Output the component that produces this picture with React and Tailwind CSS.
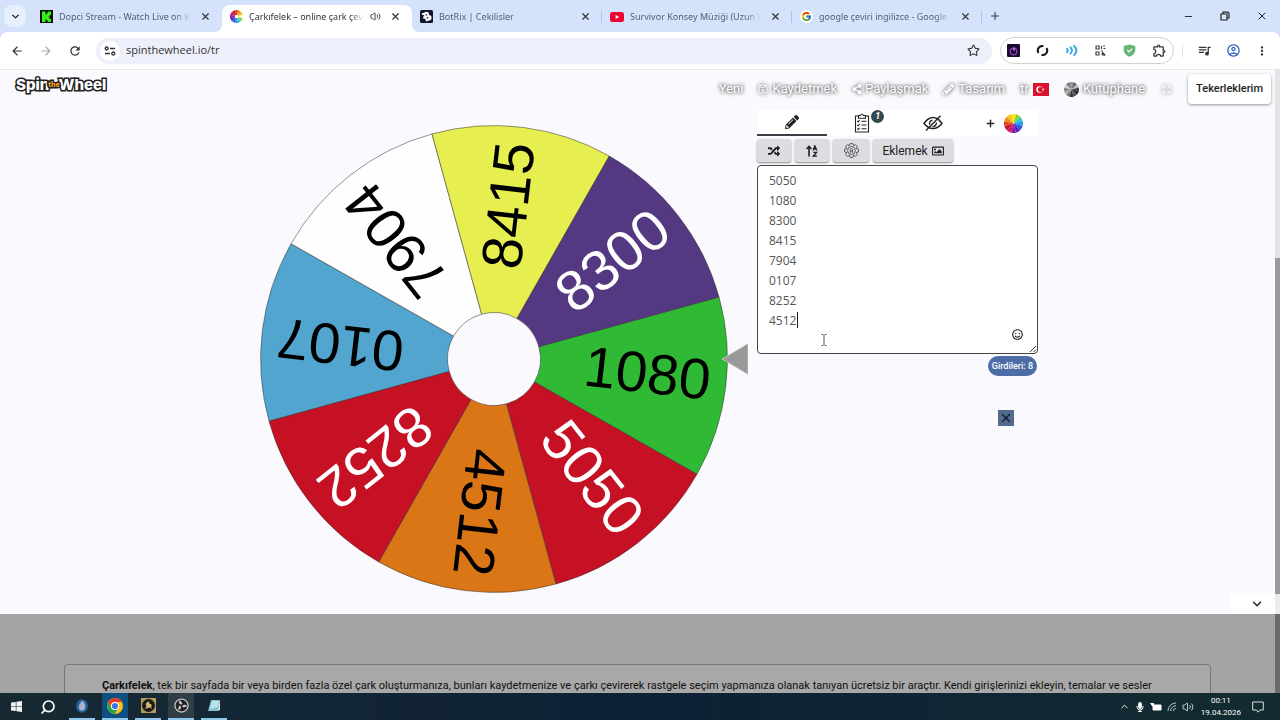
import { ChevronDown, ChevronUp, Minus, Plus, X, Star, Search, Volume2 } from 'lucide-react'
import { FaPencilAlt, FaRandom, FaRegImage, FaRegSave, FaShareAlt, FaRegSmile, FaMicrophone } from 'react-icons/fa'
import { FcGoogle } from 'react-icons/fc'
import {
  MdArrowBack,
  MdArrowForward,
  MdRefresh,
  MdFullscreen,
  MdMoreVert,
  MdOutlineAccountCircle,
  MdOutlineExtension,
  MdQueueMusic,
} from 'react-icons/md'

const SLICES = [
  { label: '1080', fill: '#30b934', text: '#000' },
  { label: '5050', fill: '#c61024', text: '#fff' },
  { label: '4512', fill: '#db7616', text: '#000' },
  { label: '8252', fill: '#c61024', text: '#fff' },
  { label: '0107', fill: '#52a5cf', text: '#000' },
  { label: '7904', fill: '#fefefe', text: '#000' },
  { label: '8415', fill: '#e7ee4f', text: '#000' },
  { label: '8300', fill: '#543881', text: '#fff' },
]

const ENTRIES = ['5050', '1080', '8300', '8415', '7904', '0107', '8252', '4512']

const RAINBOW = ['#f7ec1c', '#8fd32f', '#31c9c0', '#2a9df0', '#2a5be0', '#5a22b8', '#8e1aa0', '#d3156b', '#c4122d', '#e0461d', '#f08a1c', '#f9bf1b']
const GREYS = ['#999', '#666', '#bbb', '#444', '#222', '#555', '#333', '#777', '#aaa', '#888', '#ccc', '#777']

function point(radius, deg) {
  const rad = (deg * Math.PI) / 180
  return `${(radius * Math.cos(rad)).toFixed(2)} ${(radius * Math.sin(rad)).toFixed(2)}`
}

function slicePath(outer, inner, from, to) {
  return `M${point(inner, from)}L${point(outer, from)}A${outer} ${outer} 0 0 1 ${point(outer, to)}L${point(inner, to)}A${inner} ${inner} 0 0 0 ${point(inner, from)}Z`
}

function Wheel() {
  return (
    <svg viewBox="-234 -234 488 468" className="h-[468px] w-[488px] shrink-0" role="img" aria-label="Çarkıfelek">
      {SLICES.map((slice, i) => {
        const start = -15.4 + i * 45
        return (
          <g key={i}>
            <path d={slicePath(233.4, 46.5, start, start + 45)} fill={slice.fill} stroke="#333" strokeOpacity="0.75" strokeWidth="0.7" />
            <text
              x="154"
              y="16"
              transform={`rotate(${start + 22})`}
              textAnchor="middle"
              fontSize="57"
              fill={slice.text}
              fontFamily="'Liberation Sans', Arial, sans-serif"
            >
              {slice.label}
            </text>
          </g>
        )
      })}
      <path d="M228 0 254 -15.5V15.5Z" fill="#999" stroke="#ddd" strokeWidth="0.6" />
    </svg>
  )
}

function ColorWheel({ colors, className }) {
  const step = 360 / colors.length
  return (
    <svg viewBox="-10 -10 20 20" className={className} aria-hidden>
      {colors.map((color, i) => (
        <path key={i} d={slicePath(10, 0.1, -105 + i * step, -105 + (i + 1) * step)} fill={color} />
      ))}
    </svg>
  )
}

function RingIcon() {
  const step = 360 / RAINBOW.length
  return (
    <svg viewBox="-10 -10 20 20" className="size-[13px]" aria-hidden>
      {RAINBOW.map((color, i) => (
        <path key={i} d={slicePath(10, 2.5, -15 + i * step, -15 + (i + 1) * step)} fill={color} />
      ))}
      <circle r="2.5" fill="#fff" />
      <path d="M3 0 10-3.500v7z" fill="#fff" />
    </svg>
  )
}

function KickIcon() {
  return (
    <svg viewBox="0 0 13 13" className="size-[13px]" aria-hidden>
      <path d="M0 0h13v13H0z" fill="#0b120b" />
      <path d="M2 1.5h3.5v3h1V3.200h1.200V1.500H11v3.500H9.700v1.500h-1v1h1V9H11v3H7.700v-1.500H6.500V9.200h-1V12H2z" fill="#35f01b" />
    </svg>
  )
}

function BotrixIcon() {
  return (
    <svg viewBox="0 0 13 13" className="size-[13px]" aria-hidden>
      <rect width="13" height="13" rx="1.500" fill="#14142b" />
      <g transform="rotate(-20 6.500 6.500)">
        <path d="M3 2h4.500a2.300 2.300 0 0 1 1.700 3.900A2.600 2.600 0 0 1 7.500 11H4.500V8H3V5.500h1.500V4H3z" fill="#fff" />
        <path d="M6.200 4.300h1.300v1.200H6.200zM6.200 7.500h1.500v1.200H6.200z" fill="#14142b" />
      </g>
    </svg>
  )
}

function YoutubeIcon() {
  return (
    <svg viewBox="0 0 14 10" className="h-[10px] w-[14px]" aria-hidden>
      <rect width="14" height="10" rx="2.500" fill="#f00433" />
      <path d="M5.600 3 9.200 5 5.600 7z" fill="#fff" />
    </svg>
  )
}

const TABS = [
  { title: 'Dopci Stream - Watch Live on Kick', icon: <KickIcon /> },
  { title: 'Çarkıfelek – online çark çevirme', icon: <RingIcon />, active: true, audio: true },
  { title: 'BotRix | Cekilisler', icon: <BotrixIcon />, divider: true },
  { title: 'Survivor Konsey Müziği (Uzun Versiyon)', icon: <YoutubeIcon />, divider: true },
  {
    title: 'google çeviri ingilizce - Google Arama',
    icon: (
      <span className="rounded-full bg-white p-px">
        <FcGoogle size={11} />
      </span>
    ),
    divider: true,
  },
]

function BrowserTab({ tab }) {
  return (
    <div
      className={
        tab.active
          ? 'relative mt-[5px] flex h-[27px] w-[190px] min-w-0 items-center gap-[6px] rounded-t-lg bg-white px-2 pb-1 text-[#333] before:absolute before:bottom-0 before:-left-2 before:size-2 before:bg-[radial-gradient(circle_at_0_0,transparent_8px,#fff_8px)] after:absolute after:-right-2 after:bottom-0 after:size-2 after:bg-[radial-gradient(circle_at_100%_0,transparent_8px,#fff_8px)]'
          : 'relative mt-[5px] flex h-[27px] w-[190px] min-w-0 items-center gap-[6px] px-2 pb-1 text-[#51607a]'
      }
    >
      <span className="flex shrink-0 items-center">{tab.icon}</span>
      <span className="flex-1 overflow-hidden whitespace-nowrap text-[9px] leading-4 [mask-image:linear-gradient(to_right,#000_88%,transparent)]">
        {tab.title}
      </span>
      {tab.audio ? <Volume2 size={11} className="shrink-0" aria-hidden /> : null}
      <button type="button" aria-label="Sekmeyi kapat" className="flex shrink-0 items-center pr-[3px] pl-[3px] text-[#333]">
        <X size={11} strokeWidth={2.500} />
      </button>
      {tab.divider ? <span className="absolute top-[6px] right-0 h-3 w-px bg-[#a9c2ec]" /> : null}
    </div>
  )
}

function TabStrip() {
  return (
    <div className="flex h-8 items-start bg-[#d5e2fb]">
      <button type="button" aria-label="Sekmelerde ara" className="mt-[5px] mr-[6px] ml-1 flex size-[22px] shrink-0 items-center justify-center rounded-lg bg-[#e9f0fd] text-[#222]">
        <ChevronDown size={11} strokeWidth={3} />
      </button>
      <div className="flex min-w-0">
        {TABS.map((tab) => (
          <BrowserTab key={tab.title} tab={tab} />
        ))}
      </div>
      <button type="button" aria-label="Yeni sekme" className="ml-[7px] mt-[10px] text-[#333]">
        <Plus size={12} />
      </button>
      <div className="ml-auto mt-[10px] flex shrink-0 items-center gap-[26px] pr-3 text-[#222]">
        <button type="button" aria-label="Simge durumuna küçült">
          <Minus size={11} strokeWidth={2} />
        </button>
        <button type="button" aria-label="Önceki boyut">
          <svg viewBox="0 0 10 10" className="size-[10px]" fill="none" stroke="currentColor" strokeWidth="1.200" aria-hidden>
            <path d="M1 3h6v6H1zM3 3V1.200h4.500Q9 1.200 9 2.500V7H7" />
          </svg>
        </button>
        <button type="button" aria-label="Kapat">
          <X size={12} strokeWidth={2} />
        </button>
      </div>
    </div>
  )
}

function Toolbar() {
  return (
    <div className="flex h-[38px] shrink-0 items-center rounded-t-lg border-b border-[#e6e7ec] bg-white pr-[11px] pl-[10px] text-[#333]">
      <div className="flex items-center gap-[15px]">
        <button type="button" aria-label="Geri"><MdArrowBack size={14} /></button>
        <button type="button" aria-label="İleri" className="text-[#aaa]"><MdArrowForward size={14} /></button>
        <button type="button" aria-label="Yenile"><MdRefresh size={14} /></button>
      </div>
      <div className="ml-[14px] flex h-[26px] flex-1 items-center rounded-full bg-[#edf0fa] pr-3 pl-1">
        <span className="flex size-5 items-center justify-center rounded-full bg-white">
          <svg viewBox="0 0 12 12" className="size-3" fill="none" stroke="#333" strokeWidth="1.300" aria-hidden>
            <circle cx="2.700" cy="3.500" r="1.500" />
            <circle cx="9.300" cy="8.500" r="1.500" />
            <path d="M6 3.500h5M1 8.500h5" />
          </svg>
        </span>
        <input
          aria-label="Adres çubuğu"
          defaultValue="spinthewheel.io/tr"
          className="ml-[6px] min-w-0 flex-1 bg-transparent font-['Open_Sans',sans-serif] text-[11px] text-[#333] outline-none"
        />
        <button type="button" aria-label="Yer işareti ekle"><Star size={13} /></button>
      </div>
      <div className="ml-2 flex h-[27px] items-center gap-4 rounded-full border border-[#ccd3cc] px-[6px]">
        <svg viewBox="0 0 13 13" className="size-[13px]" aria-hidden>
          <rect width="13" height="13" rx="1" fill="#180b2e" />
          <circle cx="6.500" cy="7.500" r="3.300" fill="none" stroke="#8a3fc0" strokeWidth="1.300" />
          <path d="M6 3.500h2v3H6z" fill="#c05ad6" />
        </svg>
        <svg viewBox="0 0 13 13" className="size-[13px]" fill="none" stroke="#111" strokeWidth="2" aria-hidden>
          <path d="M7.500 2.100A4.500 4.500 0 0 0 2.600 9M5.500 10.900A4.500 4.500 0 0 0 10.400 4" />
        </svg>
        <svg viewBox="0 0 13 13" className="size-[13px]" fill="none" stroke="#2ba4ea" strokeWidth="1.800" strokeLinecap="round" aria-hidden>
          <path d="M2 5q1.500 1.500 0 3M5.500 3.500q3 3 0 6M9.200 2q4.500 4.500 0 9" />
        </svg>
        <svg viewBox="0 0 13 13" className="size-[13px]" fill="none" stroke="#444" strokeWidth="1.200" aria-hidden>
          <path d="M2 2h3v3H2zM2 8h3v3H2zM7.500 2v3M9 2h2M9.500 4.500h2M7 7h2" />
          <path d="M8 8.500 11 11.500M8 11l2-2" strokeWidth="2" />
        </svg>
        <svg viewBox="0 0 13 13" className="size-[13px]" aria-hidden>
          <path d="M6.500.500 12.300 2v4c0 3.500-3 5.600-5.800 6.800C3.700 11.600.700 9.500.700 6V2z" fill="#66b574" />
          <path d="m4.200 6 1.900 1.800 3-3.200" fill="none" stroke="#fff" strokeWidth="1.200" />
        </svg>
        <MdOutlineExtension size={15} aria-hidden />
      </div>
      <div className="ml-2 flex items-center gap-[14px]">
        <span className="h-3 w-px bg-[#dadde3]" />
        <MdQueueMusic size={15} aria-hidden />
        <MdOutlineAccountCircle size={15} className="text-[#2b5fc4]" aria-hidden />
        <button type="button" aria-label="Menü"><MdMoreVert size={14} /></button>
      </div>
    </div>
  )
}

function Flag() {
  return (
    <svg viewBox="0 0 16 13" className="h-[13px] w-4" aria-hidden>
      <path d="M0 0h16v13H0z" fill="#d8142c" />
      <circle cx="6.500" cy="6.500" r="3.200" fill="#fff" />
      <circle cx="7.400" cy="6.500" r="2.500" fill="#d8142c" />
      <path d="m11.700 6.500-2.600.9 1.600-2.300v2.800L9.100 5.600z" fill="#fff" />
    </svg>
  )
}

function SiteHeader() {
  return (
    <header className="flex h-10 items-start justify-between pr-1 pl-4">
      <a href="#" className="mt-[5px] flex items-center font-['Inter',sans-serif] text-[15px] leading-5 font-extrabold text-white [paint-order:stroke_fill] [-webkit-text-stroke:3px_#222]">
        Spin
        <span className="relative z-10 -mx-px text-[7px] text-[#f6a21c]">the</span>
        Wheel
      </a>
      <nav className="mt-1 flex items-center gap-[15px] text-[13px] leading-4 text-white [text-shadow:0_0_4px_#555,0_0_3px_#777]">
        <a href="#">Yeni</a>
        <a href="#" className="flex items-center gap-1">
          <FaRegSave size={10} className="drop-shadow-[0_0_2px_#333]" />
          Kaydetmek
        </a>
        <a href="#" className="flex items-center gap-[3px]">
          <FaShareAlt size={10} className="drop-shadow-[0_0_2px_#333]" />
          Paylaşmak
        </a>
        <a href="#" className="flex items-center gap-1">
          <FaPencilAlt size={11} className="drop-shadow-[0_0_2px_#333]" />
          Tasarım
        </a>
        <a href="#" className="flex items-center gap-1">
          tr
          <Flag />
        </a>
        <a href="#" className="flex items-center gap-1">
          <ColorWheel colors={GREYS} className="size-[15px]" />
          Kütüphane
        </a>
        <button type="button" aria-label="Tam ekran">
          <MdFullscreen size={13} className="drop-shadow-[0_0_2px_#333]" />
        </button>
        <button type="button" className="h-[30px] rounded bg-white px-2 text-[11px] font-medium text-[#222] shadow-[0_1px_3px_rgba(0,0,0,0.4)] [text-shadow:none]">
          Tekerleklerim
        </button>
      </nav>
    </header>
  )
}

function ClipboardIcon() {
  return (
    <svg viewBox="0 0 16 20" className="h-5 w-4" fill="none" stroke="#222" strokeWidth="1.100" aria-hidden>
      <path d="M4.500 3H1.500v16h13V3h-3M4.500 2.500h2Q8-.500 9.500 2.500h2v2.800h-7z" />
      <path d="m3.300 8 .9.900 1.500-1.700M3.300 11.800l.9.900 1.500-1.700M3.300 15.600l.9.900 1.500-1.700M7.500 8.300h5M7.500 12h5M7.500 15.800h5" />
    </svg>
  )
}

function EyeSlashIcon() {
  return (
    <svg viewBox="0 0 20 16" className="h-4 w-5" fill="none" stroke="#222" strokeWidth="1.400" aria-hidden>
      <path d="M1 8.500Q5 2.500 10 2.500T19 8.500Q15 13.500 10 13.500T1 8.500Z" />
      <path d="M9.500 5.200A3.200 3.200 0 0 0 6.800 9.800M13.200 7.500A3.200 3.200 0 0 1 9.500 11.400" />
      <path d="M3 15.500 17.500.800" />
    </svg>
  )
}

function SortIcon() {
  return (
    <svg viewBox="0 0 12 12" className="size-3" fill="none" stroke="#222" strokeWidth="1.600" aria-hidden>
      <path d="M3 11.500V1.500M.600 4 3 1.500 5.400 4" />
      <path d="M7 5.400 8.900.800 10.800 5.400M7.800 4h2.200M7.300 7.400h3.200L7.300 11h3.500" strokeWidth="1.300" />
    </svg>
  )
}

function GearIcon() {
  return (
    <svg viewBox="-8 -8 16 16" className="size-[15px]" fill="none" stroke="#444" strokeWidth="0.900" aria-hidden>
      {[0, 45, 90, 135, 180, 225, 270, 315].map((deg) => (
        <path key={deg} d="M-2.200-5-1.400-7.400h2.800L2.200-5" transform={`rotate(${deg})`} />
      ))}
      <circle r="4.200" />
      <path d="M-1.200 2.500V-1.200Q0-3 1.200-1.200v3.700M-1.200.500h2.400" />
    </svg>
  )
}

const toolButton = 'flex h-[23px] items-center justify-center rounded-[3px] bg-[#dcdde1] text-[#222] shadow-[0_1px_2px_rgba(0,0,0,0.45)]'

function EntriesPanel() {
  return (
    <section className="flex w-[281px] shrink-0 flex-col">
      <div className="grid h-[26px] grid-cols-4 bg-white text-[#222]">
        <button type="button" aria-label="Düzenle" className="flex items-center justify-center border-b-2 border-[#3a3f45]">
          <FaPencilAlt size={14} />
        </button>
        <button type="button" aria-label="Sonuçlar" className="relative flex items-center justify-center">
          <ClipboardIcon />
          <span className="absolute top-0 left-[44px] flex size-[13px] items-center justify-center rounded-full bg-[#37474f] text-[9px] font-bold text-white italic">
            1
          </span>
        </button>
        <button type="button" aria-label="Gizle" className="flex items-center justify-center">
          <EyeSlashIcon />
        </button>
        <button type="button" aria-label="Çark ekle" className="flex items-center justify-center gap-2 pl-[2px]">
          <Plus size={11} strokeWidth={3} />
          <ColorWheel colors={RAINBOW} className="size-[19px]" />
        </button>
      </div>
      <div className="mt-[3px] flex gap-1">
        <button type="button" aria-label="Karıştır" className={`${toolButton} w-[34px]`}>
          <FaRandom size={12} />
        </button>
        <button type="button" aria-label="Sırala" className={`${toolButton} w-[34px]`}>
          <SortIcon />
        </button>
        <button type="button" aria-label="Ayarlar" className={`${toolButton} w-9`}>
          <GearIcon />
        </button>
        <button type="button" className={`${toolButton} w-20 gap-1 text-[12px]`}>
          Eklemek
          <FaRegImage size={12} />
        </button>
      </div>
      <div className="relative mt-[3px] flex">
        <textarea
          aria-label="Girdileri"
          defaultValue={ENTRIES.join('\n')}
          className="h-[189px] w-full resize-none rounded border border-[#444] bg-white px-[11px] py-[5px] font-['Open_Sans',sans-serif] text-[12px] leading-5 text-[#555] outline-none"
        />
        <span className="absolute top-[147px] left-10 h-4 w-px bg-[#222]" />
        <svg viewBox="0 0 8 12" className="absolute top-[169px] left-[63px] h-3 w-2" fill="none" stroke="#555" aria-hidden>
          <path d="M1.500.500h1.500l1 1 1-1h1.500M4 1.500v9M1.500 11.500h1.500l1-1 1 1h1.500" />
        </svg>
        <button type="button" aria-label="Emoji ekle" className="absolute right-[15px] bottom-[14px] text-[#222]">
          <FaRegSmile size={11} />
        </button>
        <svg viewBox="0 0 6 6" className="absolute right-[2px] bottom-[2px] size-[6px]" stroke="#333" aria-hidden>
          <path d="M0 6 6 0M3.500 6 6 3.500" />
        </svg>
      </div>
      <span className="mt-[2px] mr-px self-end rounded-full bg-[#4c6da6] px-1 text-[9px] leading-5 font-medium text-white">Girdileri: 8</span>
      <button type="button" aria-label="Reklamı kapat" className="mt-[34px] mr-6 flex size-4 items-center justify-center self-end bg-[#536a8d] text-[#111827]">
        <X size={14} strokeWidth={2} />
      </button>
    </section>
  )
}

function Taskbar() {
  const slot = 'flex h-full w-[26px] items-center justify-center border-b-2 border-[#8fc7ee]'
  return (
    <footer className="flex h-[27px] shrink-0 items-center bg-linear-to-r from-[#172a33] via-[#0e2036] to-[#122c30] text-white">
      <button type="button" aria-label="Başlat" className="flex w-8 justify-center">
        <svg viewBox="0 0 11 11" className="size-[11px]" fill="#f2f2f2" aria-hidden>
          <path d="M0 1.600 4.800.900v4.300H0zM5.400.800 11 0v5.200H5.400zM0 5.800h4.800v4.300L0 9.400zM5.400 5.800H11V11l-5.600-.8z" />
        </svg>
      </button>
      <button type="button" aria-label="Ara" className="flex w-8 justify-center">
        <Search size={16} strokeWidth={2.500} className="-scale-x-100" />
      </button>
      <div className="ml-[5px] flex h-full gap-[7px]">
        <span className={slot}>
          <svg viewBox="0 0 14 14" className="size-[14px]" aria-hidden>
            <ellipse cx="7" cy="7" rx="6" ry="6.800" fill="#2e5f94" />
            <path d="M7 1.500c3 2 4 5 3 8-1 3-5 3-6 0-.700-2.500.500-4 3-8z" fill="#96b5d8" />
            <path d="M7 4.500c1.500 2 2 4 .500 6-2-1-2.500-3-.500-6z" fill="#c9a8c0" />
          </svg>
        </span>
        <span className={`${slot} bg-[#0d4f80]`}>
          <svg viewBox="-8 -8 16 16" className="size-4" aria-hidden>
            <circle r="8" fill="#fbc116" />
            <path d="M-6.900-4A8 8 0 0 1 6.900-4H0A4 4 0 0 0-3.500 2z" fill="#e33b2e" />
            <path d="M-6.900-4A8 8 0 0 0-.500 8L3.500 2A4 4 0 0 1-3.500 2z" fill="#2ba24c" />
            <circle r="4" fill="#fff" />
            <circle r="3.100" fill="#3b78e7" />
          </svg>
        </span>
        <span className={slot}>
          <svg viewBox="0 0 15 15" className="size-[15px]" aria-hidden>
            <path d="M0 0h15v15H0z" fill="#b29a5e" />
            <circle cx="7.500" cy="7.500" r="6.500" fill="#1c1a16" />
            <path d="m4 11 1.500-3-1-2 3-3 1 2.500L11 7l-1 1.500 1 2.500-2-1.500L7 10z" fill="#d0b878" />
          </svg>
        </span>
        <span className={`${slot} bg-[#2f3d47]`}>
          <svg viewBox="-8 -8 16 16" className="size-[15px]" aria-hidden>
            <circle r="7" fill="#25232a" stroke="#d8d8d8" strokeWidth="1.200" />
            {[0, 120, 240].map((deg) => (
              <path key={deg} d="M-.500-1C-3.500-2-3.500-5-1-5.800-2-4 .500-3.800.800-2.200Q.900-1.200-.500-1z" fill="#ccc" transform={`rotate(${deg})`} />
            ))}
          </svg>
        </span>
        <span className={slot}>
          <svg viewBox="0 0 14 14" className="size-[14px]" aria-hidden>
            <path d="M4 1h9l-2.500 11H1z" fill="#7fc4d0" />
            <path d="M5 2h7.500L11 8 3 10z" fill="#b8e4e8" />
            <path d="m10.500 12 2.500-1V1z" fill="#dfe8ea" />
          </svg>
        </span>
      </div>
      <div className="ml-auto flex items-center gap-[5px] pr-4">
        <ChevronUp size={11} aria-hidden />
        <FaMicrophone size={10} aria-hidden />
        <svg viewBox="0 0 12 10" className="h-[10px] w-3" aria-hidden>
          <path d="M3 3h8v5H3z" fill="#fff" stroke="#fff" />
          <path d="M0 1h4v3H2z" fill="#fff" />
        </svg>
        <svg viewBox="0 0 11 11" className="size-[10px]" fill="none" stroke="#ccc" aria-hidden>
          <path d="M1 10A9 9 0 0 1 10 1M4 10a6 6 0 0 1 6-6M7 10a3 3 0 0 1 3-3" />
        </svg>
        <Volume2 size={12} strokeWidth={1.500} aria-hidden />
        <div className="ml-[2px] text-center font-['Roboto',sans-serif] text-[8px] leading-[12px]">
          <div>00:11</div>
          <div>19.04.2026</div>
        </div>
        <svg viewBox="0 0 12 12" className="ml-[6px] size-3" fill="none" stroke="#ddd" aria-hidden>
          <path d="M.700 1h10.600v8H8L6 11.200 4.500 9H.700z" />
        </svg>
      </div>
    </footer>
  )
}

export default function App() {
  return (
    <div className="flex h-screen flex-col overflow-hidden bg-[#d5e2fb] font-['Noto_Sans',sans-serif]">
      <TabStrip />
      <Toolbar />
      <div className="flex min-h-0 flex-1 font-['Roboto',sans-serif]">
        <div className="flex min-w-0 flex-1 flex-col overflow-hidden bg-[#a4a4a5]">
          <main className="flex flex-1 shrink-0 flex-col bg-[#f9f9fe]">
            <SiteHeader />
            <div className="flex justify-center gap-[9px] pl-[23px]">
              <div className="pt-[15px]">
                <Wheel />
              </div>
              <EntriesPanel />
            </div>
            <button type="button" aria-label="Aşağı kaydır" className="mt-auto flex h-[21px] w-11 items-center justify-center self-end bg-white pl-2 text-[#222]">
              <ChevronDown size={14} strokeWidth={2.500} />
            </button>
          </main>
          <section className="h-[79px] shrink-0 overflow-hidden px-16 pt-[50px]">
            <div className="rounded-t border border-[#777] bg-[#a8a8a8] px-[37px] py-3 text-[11px] leading-[18px] whitespace-nowrap text-[#111]">
              <b>Çarkıfelek</b>, tek bir sayfada bir veya birden fazla özel çark oluşturmanıza, bunları kaydetmenize ve çarkı çevirerek rastgele seçim yapmanıza olanak tanıyan ücretsiz bir araçtır. Kendi girişlerinizi ekleyin, temalar ve sesler
            </div>
          </section>
        </div>
        <div className="flex w-[5px] flex-col bg-[#e4e4e8] pt-[188px]" aria-hidden>
          <div className="flex-1 bg-[#9a9a9c]" />
          <div className="h-5 bg-[#ececef]" />
          <div className="h-[79px] bg-[#6c6c6e]" />
        </div>
      </div>
      <Taskbar />
    </div>
  )
}
